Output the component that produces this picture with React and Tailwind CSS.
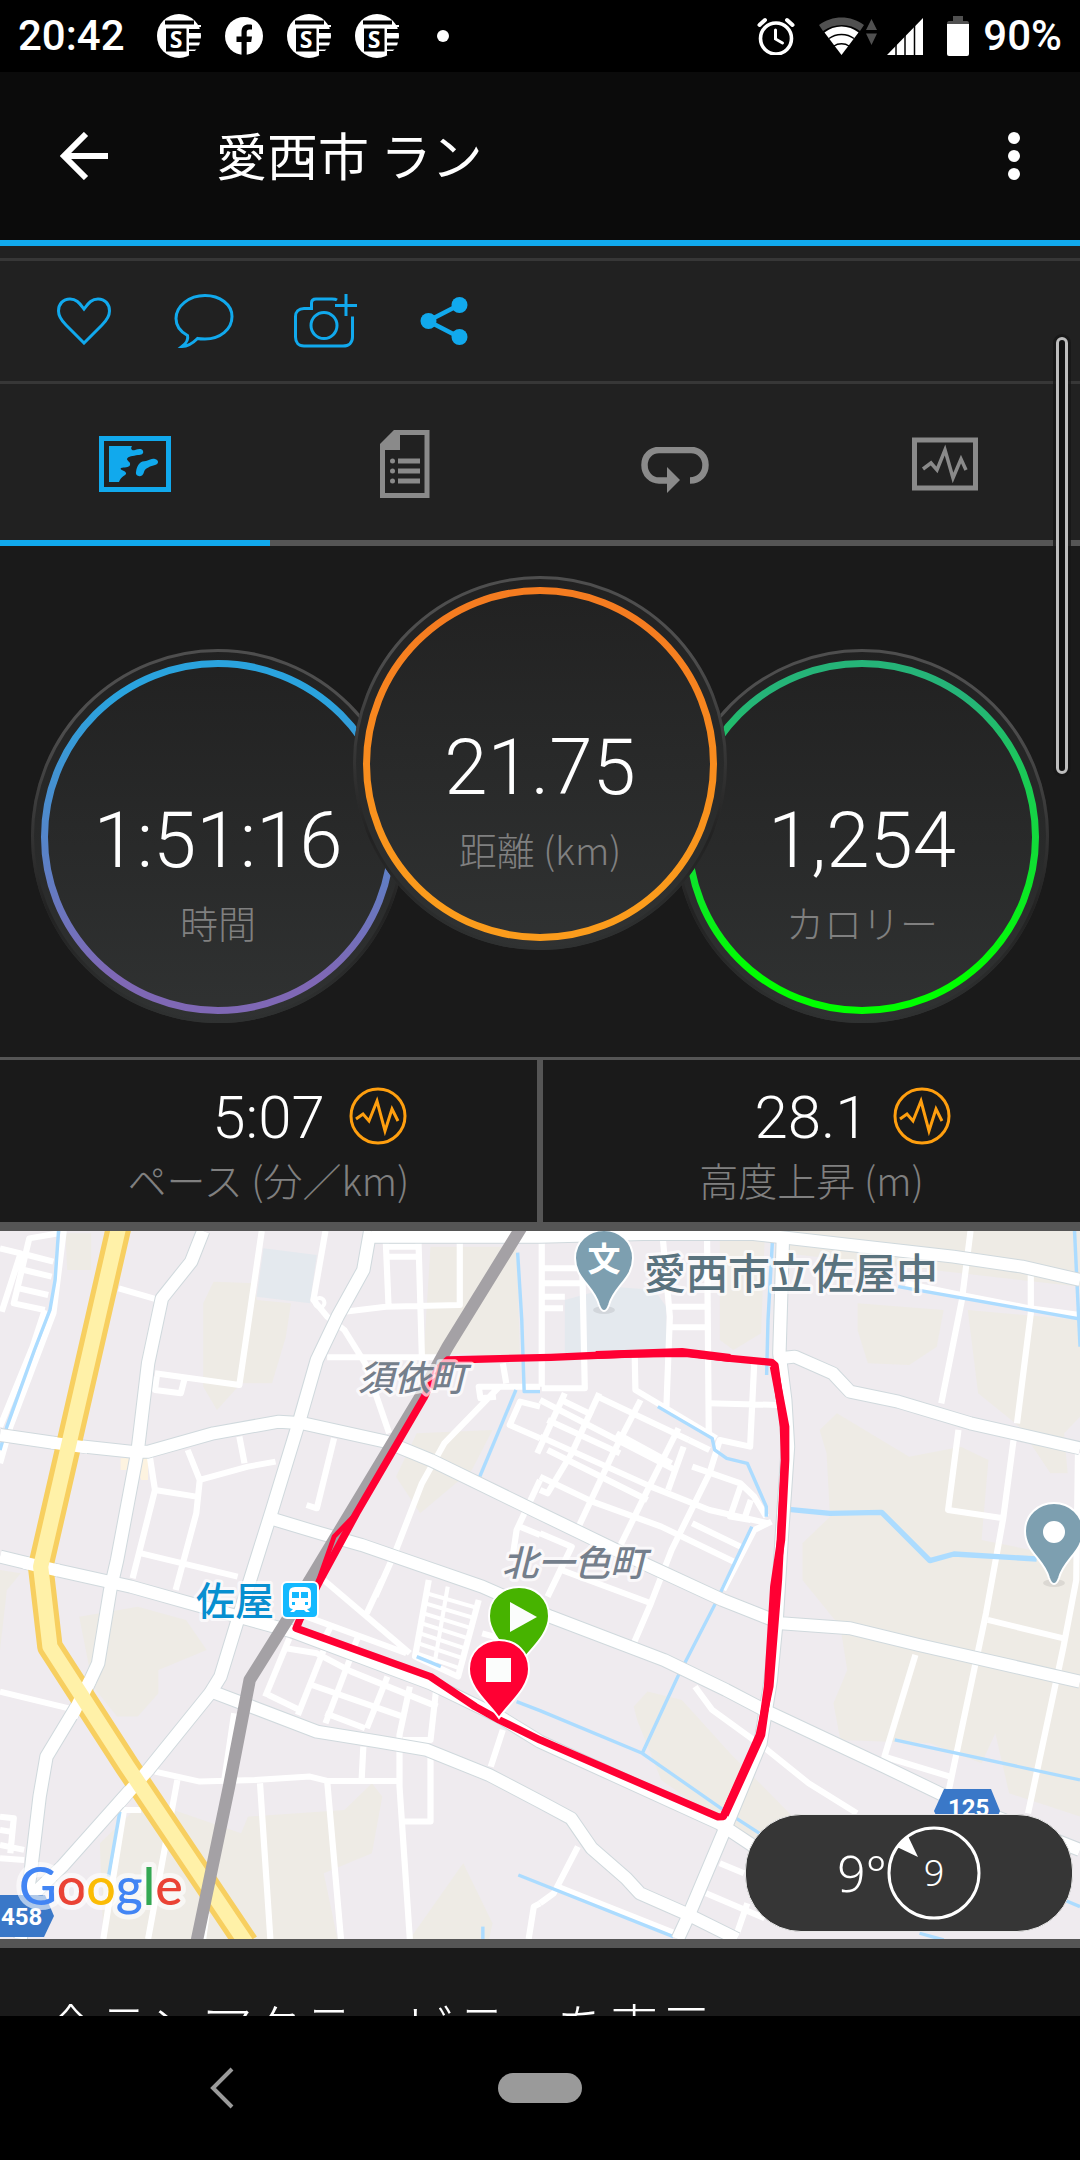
import React, { useState } from 'react';

const APP_FONT = "font-['Noto_Sans_CJK_JP','Noto_Sans',sans-serif]";

const RINGS = [
  { id: 'time', value: '1:51:16', label: '時間', from: '#2aa3de', to: '#7f68b5', className: 'mt-[73px]' },
  { id: 'distance', value: '21.75', label: '距離 (km)', from: '#f57c20', to: '#fb9c1c', className: 'z-10' },
  { id: 'calories', value: '1,254', label: 'カロリー', from: '#25b478', to: '#00ff00', className: 'mt-[73px]' },
];

const STATS = [
  { value: '5:07', label: 'ペース (分／km)' },
  { value: '28.1', label: '高度上昇 (m)' },
];

function NewsIcon() {
  return (
    <svg viewBox="0 0 44 44" className="h-11 w-11">
      <circle cx="22" cy="22" r="22" fill="#fff" />
      <path d="M8 8.500H37" stroke="#000" strokeWidth="4" />
      <path d="M8 12H44" stroke="#fff" strokeWidth="2" />
      <rect x="9" y="14.500" width="20.500" height="23" fill="#000" />
      <path d="M32 17H44M32 26.500H44M32 33.500H42M32 39H38" stroke="#000" strokeWidth="4" />
      <text x="19" y="34" textAnchor="middle" fill="#fff" className="font-['Open_Sans',sans-serif] text-[23px] font-bold">S</text>
    </svg>
  );
}

function FacebookIcon() {
  return (
    <svg viewBox="0 0 38 38" className="h-[38px] w-[38px]">
      <circle cx="19" cy="19" r="19" fill="#fff" />
      <path d="M16.500 38V25H11.500V19.500H16.500V15C16.500 9.800 19.300 7.500 23.500 7.500C25 7.500 26.300 7.600 27 7.800V12.500H24.500C22.500 12.500 21.700 13.500 21.700 15.300V19.500H27L26.200 25H21.700V38Z" fill="#000" />
    </svg>
  );
}

function StatusBar() {
  return (
    <div className="flex h-[72px] items-center justify-between bg-black pl-[18px] pr-[18px] font-['Roboto',sans-serif] text-[42px] leading-[42px] font-medium text-white">
      <div className="flex items-center gap-6">
        <span className="mr-2">20:42</span>
        <NewsIcon />
        <FacebookIcon />
        <NewsIcon />
        <NewsIcon />
        <span className="ml-[14px] h-3 w-3 rounded-full bg-white"></span>
      </div>
      <div className="flex items-center">
        <svg viewBox="0 0 38 38" className="mr-6 h-[38px] w-[38px]" fill="none" stroke="#fff" strokeLinecap="round">
          <circle cx="19" cy="21.500" r="15.500" strokeWidth="3.600" />
          <path d="M18.500 13V22L25.500 26" strokeWidth="3" />
          <path d="M2.500 8L8 3M35.500 8L30 3" strokeWidth="4" />
        </svg>
        <svg viewBox="0 0 58 38" className="mr-[10px] h-[38px] w-[58px]">
          <path d="M0 8C13 -2 32 -2 45 8L41 14C31 6 15 6 4 14Z" fill="#505050" />
          <path d="M5.500 15.500C15 7.500 30 7.500 39.500 15.500L22.500 38Z" fill="#fff" />
          <path d="M10 21.500C17 16 28 16 35 21.500M15 29C19 26 26 26 30 29" fill="none" stroke="#000" strokeWidth="1.500" />
          <path d="M47 13H58L52.500 2ZM47 16.500H58L52.500 28Z" fill="#505050" />
        </svg>
        <svg viewBox="0 0 36 37" className="mr-6 h-[37px] w-9">
          <path d="M0 37L36 0V37Z" fill="#fff" />
          <path d="M9 0V37M18 0V37M27.500 0V37" stroke="#000" strokeWidth="1.500" />
        </svg>
        <svg viewBox="0 0 22 40" className="mr-[14px] h-10 w-[22px]">
          <path d="M6 0H16V5H20Q22 5 22 8H0Q0 5 2 5H6Z" fill="#505050" />
          <path d="M0 8H22V38Q22 40 20 40H2Q0 40 0 38Z" fill="#fff" />
        </svg>
        <span>90%</span>
      </div>
    </div>
  );
}

function Header() {
  return (
    <header className="flex h-[174px] items-center border-b-6 border-[#11a9ed] bg-[#0b0b0b] px-[60px] text-white">
      <button aria-label="戻る" className="mr-[108px]">
        <svg viewBox="0 0 48 48" className="h-12 w-12" fill="none" stroke="#fff" strokeWidth="6">
          <path d="M48 24H5M26 2L4 24L26 46" />
        </svg>
      </button>
      <h1 className="grow pb-1 text-[51px] leading-[60px] font-normal">愛西市 ラン</h1>
      <button aria-label="その他" className="flex w-3 flex-col gap-[6px]">
        <span className="h-3 w-3 rounded-full bg-white"></span>
        <span className="h-3 w-3 rounded-full bg-white"></span>
        <span className="h-3 w-3 rounded-full bg-white"></span>
      </button>
    </header>
  );
}

function ActionRow() {
  const button = 'flex w-[120px] items-center justify-center';
  return (
    <div className="flex h-[138px] border-b-3 border-[#373737] bg-[#212121] pt-3">
      <div className="flex w-full border-t-3 border-[#373737] pl-6 text-[#11a9ed]">
        <button aria-label="いいね" className={button}>
          <svg viewBox="0 0 54 48" className="h-12 w-[54px]" fill="none" stroke="currentColor" strokeWidth="3">
            <path d="M27 12C23 7 20 2 13 2C6 2 1.500 7 1.500 14C1.500 20 5 24 9 28L27 46L45 28C49 24 52.500 20 52.500 14C52.500 7 48 2 41 2C34 2 31 7 27 12Z" />
          </svg>
        </button>
        <button aria-label="コメント" className={button}>
          <svg viewBox="0 0 60 54" className="h-[54px] w-[60px]" fill="none" stroke="currentColor" strokeWidth="3">
            <path d="M31 1.500C46 1.500 58 10.500 58 22.500C58 35.500 46 45 31 45C28 45 26 45 23.500 44.500C19.500 48.500 15 52.500 8 52.500C12.500 49 14.500 45 13.500 41.500C6 37.500 2 32 2 24.500C2 12 15 1.500 31 1.500Z" />
          </svg>
        </button>
        <button aria-label="写真を追加" className={button}>
          <svg viewBox="-4 -1 68 56" className="h-14 w-[68px]" fill="none" stroke="currentColor" strokeWidth="3">
            <path d="M43 6C41.500 5 40 5 38 5H22C19 5 17.500 6.500 17.500 9V14.500H10C4.500 14.500 1.500 18 1.500 22.500V43C1.500 48.500 4.500 52 10 52H49C55 52 58.500 48.500 58.500 43V22.500" />
            <circle cx="30" cy="31.500" r="13" />
            <path d="M52 0V22M41 11.500H63" />
          </svg>
        </button>
        <button aria-label="共有" className={button}>
          <svg viewBox="0 0 48 48" className="h-12 w-12" fill="currentColor">
            <path d="M39 8L8 24L39 40" fill="none" stroke="currentColor" strokeWidth="4.500" />
            <circle cx="39.500" cy="8" r="8" />
            <circle cx="8.500" cy="24" r="8" />
            <circle cx="39.500" cy="40" r="8" />
          </svg>
        </button>
      </div>
    </div>
  );
}

const TABS = [
  {
    label: '地図',
    icon: (
      <svg viewBox="0 0 72 56" className="h-14 w-[72px]">
        <rect x="2.500" y="2.500" width="67" height="51" fill="none" stroke="currentColor" strokeWidth="5" />
        <path d="M10 10H33C31 13 33 15 36 14C39 13 43 12 44 15C45 18 42 19 39 19C34 20 29 20 28 23C28 25 32 26 31 29C30 32 25 31 22 32C20 34 26 34 27 37C28 39 22 40 20 46H10Z" fill="currentColor" />
        <path d="M37 36C38 28 42 25 47 25C51 24 53 22 56 23C60 24 60 28 56 29C52 30 46 32 45 36C44 42 36 41 37 36Z" fill="currentColor" />
      </svg>
    ),
  },
  {
    label: '統計',
    icon: (
      <svg viewBox="0 0 50 68" className="h-[68px] w-[50px]">
        <path d="M2.500 15L15 2.500H47V65.500H2.500Z" fill="none" stroke="currentColor" strokeWidth="5" />
        <path d="M1 14L14 1H20V20H1Z" fill="currentColor" />
        <path d="M18 31H40M18 41H40M18 51H40" stroke="currentColor" strokeWidth="5" />
        <circle cx="12.500" cy="31" r="2.500" fill="currentColor" />
        <circle cx="12.500" cy="41" r="2.500" fill="currentColor" />
        <circle cx="12.500" cy="51" r="2.500" fill="currentColor" />
      </svg>
    ),
  },
  {
    label: 'ラップ',
    icon: (
      <svg viewBox="0 0 68 46" className="mt-3 h-[46px] w-[68px]">
        <path d="M49 33.500C58 33.500 64.500 27 64.500 18C64.500 9 58 3 50 3H18C10 3 3.500 9 3.500 18C3.500 27 10 33.500 18 33.500H28" fill="none" stroke="currentColor" strokeWidth="6.500" />
        <path d="M26 20L39 33L26 46Z" fill="currentColor" />
      </svg>
    ),
  },
  {
    label: 'グラフ',
    icon: (
      <svg viewBox="0 0 66 54" className="h-[54px] w-[66px]" fill="none" stroke="currentColor">
        <rect x="2.500" y="3" width="61" height="48" strokeWidth="5" />
        <path d="M11 32L19 26L25 33L33 13L41 41L49 22L54 33" strokeWidth="3.500" />
      </svg>
    ),
  },
];

function TabBar() {
  const [active, setActive] = useState(0);

  return (
    <div role="tablist" className="grid grid-cols-4 bg-[#212121]">
      {TABS.map((tab, i) => (
        <button
          key={tab.label}
          role="tab"
          aria-label={tab.label}
          aria-selected={i === active}
          onClick={() => setActive(i)}
          className={`flex h-[162px] items-center justify-center border-b-6 pt-1 ${
            i === active ? 'border-[#11a9ed] text-[#11a9ed]' : 'border-[#555555] text-[#8a8a8a]'
          }`}
        >
          {tab.icon}
        </button>
      ))}
    </div>
  );
}

function Ring({ id, value, label, from, to, className }) {
  return (
    <div className={`relative -mx-[27px] h-[376px] w-[376px] shrink-0 ${className}`}>
      <svg viewBox="0 0 376 376" className="absolute inset-0 h-full w-full">
        <defs>
          <linearGradient id={`${id}-ring`} x1="0" y1="0" x2="0" y2="1">
            <stop offset="0.100" stopColor={from} />
            <stop offset="0.900" stopColor={to} />
          </linearGradient>
          <linearGradient id={`${id}-face`} x1="0" y1="0" x2="0" y2="1">
            <stop offset="0" stopColor="#212121" />
            <stop offset="1" stopColor="#303232" />
          </linearGradient>
          <linearGradient id={`${id}-edge`} x1="0" y1="0" x2="0" y2="1">
            <stop offset="0.200" stopColor="#4e4e4e" />
            <stop offset="0.700" stopColor="#222222" />
            <stop offset="1" stopColor="#2f3131" />
          </linearGradient>
        </defs>
        <circle cx="188" cy="187" r="187" fill={`url(#${id}-face)`} />
        <circle cx="188" cy="187" r="185.500" fill="none" stroke={`url(#${id}-edge)`} strokeWidth="3" />
        <circle cx="188" cy="188" r="173.500" fill="none" stroke={`url(#${id}-ring)`} strokeWidth="7" />
      </svg>
      <div className="relative pt-[152px] text-center">
        <p className="font-['Roboto',sans-serif] text-[78px] leading-[80px] font-light text-white">{value}</p>
        <p className="mt-4 text-[38px] leading-[50px] font-light text-[#808080]">{label}</p>
      </div>
    </div>
  );
}

function StatCell({ value, label }) {
  return (
    <div className="bg-[#1a1a1a] pt-[26px] text-center">
      <div className="grid grid-cols-[1fr_auto_1fr] items-center">
        <span className="col-start-2 pt-1 font-['Roboto',sans-serif] text-[60px] leading-[56px] font-light text-white">{value}</span>
        <svg viewBox="0 0 58 58" className="ml-6 h-[58px] w-[58px]" fill="none" stroke="#ff9f0f" strokeWidth="3">
          <circle cx="29" cy="29" r="27" />
          <path d="M7 32L14 27L20 34L28 14L36 44L43 22L49 34" />
        </svg>
      </div>
      <p className="mt-2 text-[39px] leading-[50px] font-light text-[#808080]">{label}</p>
    </div>
  );
}

const FARMLAND = [
  'M620 185L740 190L745 240L845 250L830 350L790 490L700 490L630 570L590 500V250Z',
  'M1250 80H1500L1510 420L1350 400L1230 410Z',
  'M1210 640L1430 630L1370 750L1300 810L1220 880L1150 770Z',
  'M190 40H265V150H195Z',
  'M0 1050L60 1060L20 1110L0 1290Z',
  'M230 1190L400 1160L540 1200L600 1290L460 1350V1420L400 1490H340L270 1400Z',
  'M290 1870L420 1740L700 1840L720 1790L1000 1770L1080 1690L1110 1730L1080 1900L940 1960L980 2157H300Z',
  'M1345 1930L1430 2110L1420 2157H1190Z',
  'M2090 60H2220L2210 340L2130 390L2090 360Z',
  'M2280 33H3136V200L2280 100Z',
  'M2490 250L2740 270L2720 380L2640 435L2520 430L2490 330Z',
  'M2810 270L3136 300V590L3090 640L3100 760L3050 760L2960 620L2840 520Z',
  'M2380 630L2430 580L2640 710L2790 680L2870 720L2850 960L3136 1020V1790L2930 1720L2890 1540L2850 1630L2700 1570L2440 1560L2420 1450L2460 1350L2440 1220L2330 1080V970L2410 890L2400 700Z',
  'M1840 1460L1880 1415L1980 1440L2120 1600L2330 1820L2220 1900L1920 1680L1850 1500Z',
];

const WATER = [
  'M170 33L160 180L145 270L100 390L20 620L0 690',
  'M1503 98L1515 300L1522 515H1568',
  'M1498 510L1393 770',
  'M2243 60L2230 300L2226 465',
  'M1910 560L2068 655L2075 690L2110 715L2170 730L2225 860V890',
  'M2183 920L2100 1100L2080 1145L1968 1370L1865 1600',
  'M1500 1445L1568 1472L1865 1600L2100 1770L2220 1850',
  'M2608 200L3136 297',
  'M3120 33L3136 380',
  'M2598 1560L3136 1680',
  'M1505 1965L1955 2150',
  'M1210 1310L1280 1340',
  'M348 1775L315 1970',
  'M1402 2120V2157',
  'M3090 2040L3136 2060',
  'M2670 2140L2740 2160',
];

const LANES = [
  'M0 85L60 100L5 275M170 40L85 55L40 250L130 270M80 105L155 125M70 150L150 170M55 205L140 225',
  'M185 33L155 280L30 620L0 730',
  'M130 270L95 380L0 620',
  'M345 205L460 240',
  'M760 33L695 495L450 460M455 470L450 510L525 520L535 480',
  'M945 33L910 240L950 290L1000 330L1060 430L1130 640',
  'M950 412H1300M1000 275L1120 260L1335 255V60M1120 60L1128 255M1120 110H1215M1120 80H1215M1215 60L1225 410',
  'M1568 500H1390L1395 535L1440 530M1470 490L1460 430M1450 500L1290 670L1225 790L1150 990L1090 1130',
  'M1568 560L1510 545L1480 615L1568 655',
  'M970 655L920 865L890 855',
  'M545 690L580 780L570 880L510 1110M580 780L720 740L800 725M695 650L710 730M435 710L450 810L385 1075M450 810L570 830M410 1000L690 1070',
  'M1568 780L1500 930L1490 1000M1510 920L1568 945',
  'M940 1080L1190 1300M1110 1080L1065 1180M890 1190L1180 1300M960 1220L940 1260M1040 1250L1020 1300',
  'M0 1415L200 1465',
  'M840 1255L770 1430M940 1290L865 1485M1015 1320L945 1510M1125 1370L1065 1525M1190 1400L1160 1545V1700L1190 2157',
  'M830 1285L920 1300L1020 1355L1270 1460M905 1395L1170 1490M780 1425L870 1470M945 1480L1060 1525',
  'M1270 1375L1250 1560H1170M1055 1580L1050 1680M1250 1600V1805H1170',
  'M450 1655L580 1685L740 1680L900 1670L950 1683H1155M755 1690L785 2157M950 1683L990 2157M515 1680L430 2157M680 1480L650 1690',
  'M410 1770H360L300 2157M600 2080L590 2157',
  'M0 1790L40 1795L30 1900M0 1830L30 1835M0 1875L70 1890M0 1915L70 1920',
  'M1245 1080L1205 1310L1330 1370L1390 1140M1400 1240L1470 1260',
  'M1460 1530L1425 1640M1535 2157L1550 2060L1568 2050',
  'M1573 70V500M1573 145H1690M1573 190H1690M1573 230H1640M1573 265H1635M1690 100L1698 505H1573',
  'M1925 60L1945 290L1935 560M2053 50L2058 640M1943 260H2055M1943 322H2055M1843 410L1845 510L2080 655',
  'M2058 550L2260 555M2190 430L2178 680L2090 660L2060 760L1950 990L1890 1150',
  'M1640 520L1560 700M1740 520L1660 700L1590 820L1568 810M1860 540L1780 700L1680 920M1970 625L1885 800L1790 1000',
  'M1568 540L1960 750M1630 540L1720 585M1735 530L2000 660M1590 600L1800 700M1790 640L1950 730M1568 650L1890 800L2060 870L2230 910M1568 770L1720 845L1920 920L2140 1030M1590 690L1880 840',
  'M2000 660L2060 690M1985 680L1940 810M2010 740L2150 790L2190 830L2225 890M2150 800L2120 890L2180 900M2180 840L2160 900M2010 910L2150 980',
  'M2240 905L2190 930L2100 1110M1568 940L1660 980L1590 1130M1630 1050L1890 1150L1840 1270',
  'M2818 33L2793 240L2733 550M2993 165V280L2953 610M2783 630L2753 870L2913 895M2943 660L2913 895L2863 1180L2753 1720',
  'M2630 190L2790 225L2990 265L3136 285',
  'M3130 700L3125 1080L3088 1280L2985 1780M2868 1200L3088 1255',
  'M2658 1305L2568 1610L2758 1670',
  'M2018 1400L2068 1470L2228 1590L2348 1690L2488 1780',
  'M1678 1880L1608 2020L1568 2050M1618 2000L1960 2140M2090 1930L2160 1960M2050 2020L2220 2095M2170 2050L2140 2140',
];

const ROADS = [
  'M590 33L555 125L470 235L430 430L400 690L340 1020L320 1110L285 1330L240 1430L135 1610L115 1730L90 1950L60 2157',
  'M0 645L200 675L380 695H430L620 640L810 605L880 610L1120 665L1250 720L1568 880L1868 1030L2098 1140L2208 1185L2268 1210L2468 1225L2668 1275L3136 1385',
  'M1075 33L1055 150L980 290L920 420L870 600L790 870L720 1100L640 1370L610 1420L430 1650L180 1940L60 2060',
  'M785 895L930 940L1050 975L1400 1100L1598 1190L1928 1320L2108 1410L2228 1475L2568 1640L2768 1740L3136 1890',
  'M0 1010L140 1045L380 1100L570 1155L850 1235L1250 1390L1450 1490L1568 1565L2088 1810L2190 1880L2400 2000',
  'M615 1415L730 1460L920 1535L1100 1565L1240 1590L1420 1665L1568 1745L1658 1795L1718 1885L1818 1975L1858 2020L1990 2080L2140 2157',
  'M1080 50H1568L1868 42L2188 42L2468 75L2768 110L2968 140L3136 180',
  'M2273 60L2263 400L2280 540L2288 680L2270 950L2255 1200L2238 1380L2208 1570L2108 1820L1998 2090L1968 2157',
  'M2263 415L2308 410L2418 460L2468 515L2608 545L2818 610L3136 685',
];

const HIGHWAY = 'M345 20L205 650L118 1040L145 1280L370 1640L715 2170';
const RAILWAY = 'M1515 20L1300 380L1215 540L900 1080L840 1190L725 1380L665 1700L570 2170';
const ROUTE =
  'M1300 420L1600 412L1820 402L1990 400L2120 415L2240 427L2250 436L2275 620L2278 720L2260 1080L2235 1400L2205 1545L2100 1790L2085 1791L1568 1560L1450 1500L1380 1460L1250 1370L860 1225L870 1200L930 1080L1035 880L1230 535L1270 450Z';

const LABEL_HALO = '[paint-order:stroke] [stroke-linejoin:round]';

function Pin({ x, y, fill, children }) {
  return (
    <g transform={`translate(${x} ${y})`}>
      <ellipse cx="0" cy="51" rx="11" ry="4" fill="#000" opacity="0.080" />
      <path d="M0 52C-3 52 -4 49 -5 46C-10 27 -29 20 -29 -1C-29 -17 -16 -29 0 -29C16 -29 29 -17 29 -1C29 20 10 27 5 46C4 49 3 52 0 52Z" fill={fill} stroke="#fff" strokeWidth="2" />
      {children}
    </g>
  );
}

function RoutePin({ x, y, fill, children }) {
  return (
    <g transform={`translate(${x} ${y})`}>
      <path d="M0 49C-9 35 -30 20 -30 0C-30 -17 -17 -29 0 -29C17 -29 30 -17 30 0C30 20 9 35 0 49Z" fill={fill} stroke="#fff" strokeWidth="2" />
      {children}
    </g>
  );
}

function RouteMap() {
  return (
    <svg
      viewBox="0 0 1080 708"
      preserveAspectRatio="xMidYMid slice"
      role="img"
      aria-label="ルート地図"
      className={`block h-[708px] w-full bg-[#efebef] ${APP_FONT}`}
    >
      <g transform="scale(0.3444 0.3333) translate(0 -33)" fill="none" strokeLinejoin="round">
        {FARMLAND.map((d) => <path key={d} d={d} fill="#eeebe5" />)}
        <path d="M765 85L920 105L900 250L745 230ZM1640 240L1780 200L1900 210L1935 260V400L1640 420Z" fill="#e4e9ee" />
        <path d="M350 715H430V780H410L400 750H350Z" fill="#fdf3e0" />
        {LANES.map((d) => <path key={d} d={d} stroke="#fff" strokeWidth="18" />)}
        <path d="M1240 1120L1390 1165M1235 1150L1380 1195M1230 1180L1370 1225M1225 1210L1360 1255M1220 1240L1350 1285M1215 1270L1345 1315M1210 1300L1335 1345M1300 1100L1260 1340" stroke="#fff" strokeWidth="12" />
        <circle cx="928" cy="248" r="14" stroke="#fff" strokeWidth="12" />
        {WATER.map((d) => <path key={d} d={d} stroke="#acdcff" strokeWidth="10" />)}
        <path d="M2290 868L2410 880L2560 877L2700 1022L2770 1002L3010 1017" stroke="#acdcff" strokeWidth="16" />
        {ROADS.map((d) => <path key={d} d={d} stroke="#d0d9dd" strokeWidth="42" />)}
        {ROADS.map((d) => <path key={d} d={d} stroke="#fff" strokeWidth="36" />)}
        <path d={HIGHWAY} stroke="#f7cf60" strokeWidth="74" />
        <path d="M150 668L255 683M70 1028L170 1052M262 1380L208 1490M432 1648L345 1750" stroke="#fff" strokeWidth="36" />
        <path d={HIGHWAY} stroke="#fff1a8" strokeWidth="44" />
        <path d={RAILWAY} stroke="#a4a1a5" strokeWidth="36" />
        <path d={ROUTE} stroke="#ff0033" strokeWidth="22" />
        <path d="M1035 880L970 950L922 1090" stroke="#ff0033" strokeWidth="14" />
        <path d="M1730 405L1980 396L2120 414M2247 440L2280 620L2280 720L2268 960L2248 1100L2230 1400L2210 1545L2104 1785" stroke="#ff0033" strokeWidth="24" />
      </g>

      <g stroke="#ffffff" strokeOpacity="0.700" strokeWidth="6" className={LABEL_HALO}>
        <text x="358" y="160" fill="#757f8c" className="text-[36px] font-medium italic">須依町</text>
        <text x="502" y="345" fill="#757f8c" className="text-[36px] font-medium italic">北一色町</text>
        <text x="644" y="58" fill="#5a737e" className="text-[42px] font-medium">愛西市立佐屋中</text>
        <text x="196" y="384" fill="#088fd0" className="text-[39px] font-medium">佐屋</text>
      </g>

      <rect x="282" y="351" width="36" height="36" rx="5" fill="#13b9ff" stroke="#fff" strokeWidth="2" />
      <path d="M289 362Q289 356 295 356H305Q311 356 311 362V374Q311 378 307 378L310 381H306L304 379H296L294 381H290L293 378Q289 378 289 374Z" fill="#fff" />
      <path d="M292 361H299V367H292ZM301 361H308V367H301ZM292 371H295V374H292ZM305 371H308V374H305Z" fill="#13b9ff" />

      <Pin x="604" y="28" fill="#7d9fb0">
        <text x="0" y="12" textAnchor="middle" fill="#fff" className="text-[33px] font-bold">文</text>
      </Pin>
      <Pin x="1054" y="301" fill="#7d9fb0">
        <circle r="11" fill="#fff" />
      </Pin>
      <RoutePin x="519" y="385" fill="#47b300">
        <path d="M-9 -14L18 1L-9 16Z" fill="#fbfdfc" />
      </RoutePin>
      <RoutePin x="499" y="438" fill="#ff0033">
        <rect x="-13" y="-11" width="25" height="24" fill="#fbfdfc" />
      </RoutePin>

      <path d="M0 664H45L54 685L44 706H0Z" fill="#3a78c8" />
      <path d="M934 580L944 558H991L1000 580L991 602H944Z" fill="#3a78c8" />
      <g fill="#fff" className="font-['Roboto',sans-serif] text-[24px] font-bold">
        <text x="1" y="694">458</text>
        <text x="948" y="585">125</text>
      </g>

      <text x="19" y="674" stroke="#ffffff" strokeOpacity="0.600" strokeWidth="10" className={`font-['Lato',sans-serif] text-[52px] font-medium ${LABEL_HALO}`}>
        <tspan fill="#4285f4">G</tspan>
        <tspan fill="#ea4335">o</tspan>
        <tspan fill="#fbbc05">o</tspan>
        <tspan fill="#4285f4">g</tspan>
        <tspan fill="#34a853">l</tspan>
        <tspan fill="#ea4335">e</tspan>
      </text>
    </svg>
  );
}

// wind and temperature chip over the map corner
function WeatherChip() {
  return (
    <div className="absolute right-[7px] bottom-[7px] flex h-[118px] w-[328px] items-center justify-center rounded-[56px] border border-[#e8e8e8] bg-[#363636] font-['Noto_Sans',sans-serif] font-light text-white">
      <span className="text-[50px] leading-[60px]">9°</span>
      <div className="relative flex h-[94px] w-[94px] items-center justify-center">
        <svg viewBox="0 0 94 94" className="absolute inset-0 h-full w-full">
          <circle cx="47" cy="47" r="45" fill="none" stroke="#fff" strokeWidth="3" />
          <path d="M10 21L21 10L31 31Z" fill="#fff" />
        </svg>
        <span className="text-[36px] leading-[40px]">9</span>
      </div>
    </div>
  );
}

function NavBar() {
  return (
    <nav className="grid h-36 grid-cols-3 items-center bg-black">
      <button aria-label="戻る" className="mr-[126px] justify-self-end">
        <svg viewBox="0 0 24 42" className="h-[42px] w-6" fill="none" stroke="#9a9a9a" strokeWidth="4">
          <path d="M22 2L3 21L22 40" />
        </svg>
      </button>
      <button aria-label="ホーム" className="h-[30px] w-[84px] justify-self-center rounded-full bg-[#9a9a9a]"></button>
    </nav>
  );
}

function App() {
  return (
    <div className={`relative flex min-h-screen flex-col bg-[#1a1a1a] ${APP_FONT}`} lang="ja">
      <StatusBar />
      <Header />
      <ActionRow />
      <TabBar />

      <section className="flex h-[511px] items-start justify-center pt-[30px]">
        {RINGS.map((ring) => <Ring key={ring.id} {...ring} />)}
      </section>

      <section className="grid h-[174px] grid-cols-2 gap-[6px] border-t-3 border-b-9 border-[#555555] bg-[#555555]">
        {STATS.map((stat) => <StatCell key={stat.label} {...stat} />)}
      </section>

      <section className="relative border-b-9 border-[#555555]">
        <RouteMap />
        <WeatherChip />
      </section>

      <div className="h-[68px] overflow-hidden px-[45px] pt-[52px]">
        <a href="#activities" className="block text-[52px] leading-[51px] font-light whitespace-nowrap text-white">
          全ランアクティビティを表示
        </a>
      </div>

      <NavBar />

      <div className="absolute top-[337px] right-3 h-[437px] w-3 rounded-full border-3 border-[#bdbdbd] bg-[#111111] ring-3 ring-[#161616]/80"></div>
    </div>
  );
}

export default App;
